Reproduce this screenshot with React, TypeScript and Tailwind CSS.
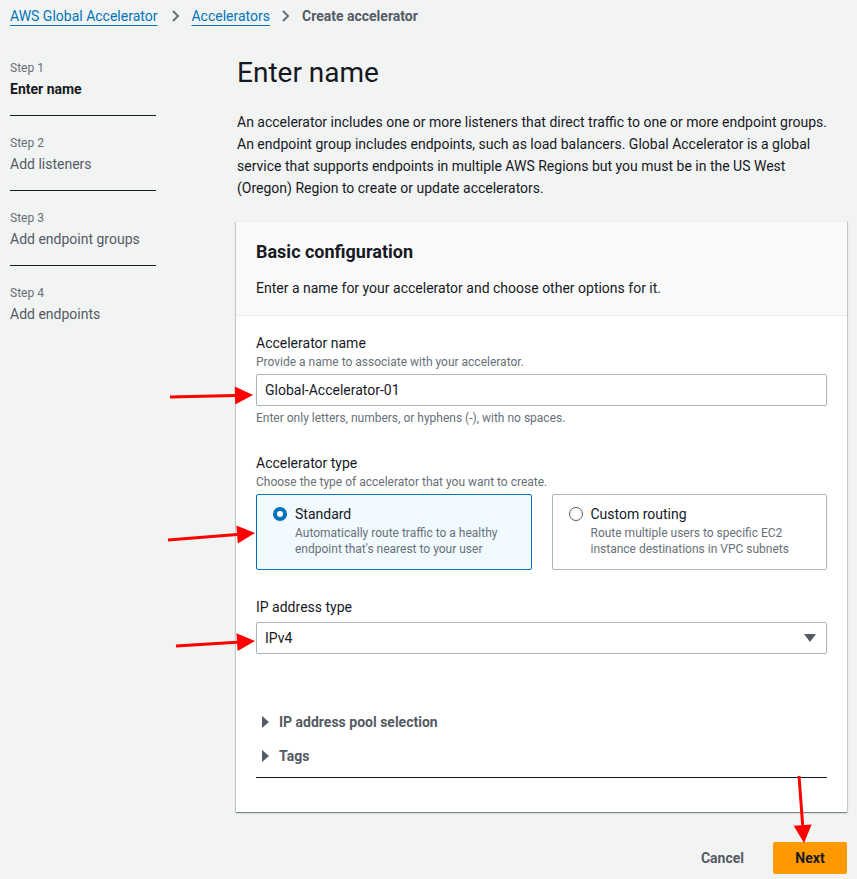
import React from "react";

const Arrow = ({ x1, y1, x2, y2 }: { x1: number; y1: number; x2: number; y2: number }) => {
  const dx = x2 - x1;
  const dy = y2 - y1;
  const len = Math.sqrt(dx * dx + dy * dy);
  const ux = dx / len;
  const uy = dy / len;
  const hl = 18;
  const hw = 9;
  const bx = x2 - ux * hl;
  const by = y2 - uy * hl;
  const px = -uy;
  const py = ux;
  return (
    <g>
      <line x1={x1} y1={y1} x2={bx} y2={by} stroke="#ff0000" strokeWidth={3} />
      <polygon
        points={`${x2},${y2} ${bx + px * hw},${by + py * hw} ${bx - px * hw},${by - py * hw}`}
        fill="#ff0000"
      />
    </g>
  );
};

const Step = ({ n, label, active, last }: { n: number; label: string; active?: boolean; last?: boolean }) => (
  <div className={`w-[146px] ${last ? "" : "border-b border-[#16191f] pb-[15px] mb-[19px]"}`}>
    <div className="text-[12px] leading-[16px] text-[#687078]">Step {n}</div>
    <div className={`text-[14px] leading-[22px] mt-[2px] ${active ? "font-bold text-[#16191f]" : "text-[#545b64]"}`}>{label}</div>
  </div>
);

export default function App() {
  return (
    <div
      className="relative w-[857px] min-h-[879px] bg-[#f2f3f3] text-[#16191f] overflow-hidden"
      style={{ fontFamily: "Roboto, 'Liberation Sans', sans-serif" }}
    >
      {/* breadcrumb */}
      <div className="flex items-center pl-[10px] pt-[6px] text-[14px] leading-[20px]">
        <span className="text-[#0073bb] underline underline-offset-[4px]">AWS Global Accelerator</span>
        <svg width="12" height="14" viewBox="0 0 12 14" className="ml-[13px] mr-[9px]">
          <path d="M3 2 L8 7 L3 12" fill="none" stroke="#687078" strokeWidth="2" />
        </svg>
        <span className="text-[#0073bb] underline underline-offset-[4px]">Accelerators</span>
        <svg width="12" height="14" viewBox="0 0 12 14" className="mx-[10px]">
          <path d="M3 2 L8 7 L3 12" fill="none" stroke="#687078" strokeWidth="2" />
        </svg>
        <span className="text-[#545b64] font-bold">Create accelerator</span>
      </div>

      <div className="flex">
        {/* left nav */}
        <div className="pl-[10px] pt-[34px] w-[236px] shrink-0">
          <Step n={1} label="Enter name" active />
          <Step n={2} label="Add listeners" />
          <Step n={3} label="Add endpoint groups" />
          <Step n={4} label="Add endpoints" last />
        </div>

        {/* main */}
        <div className="w-[611px] pt-[29px]">
          <h1 className="text-[28px] leading-[36px] font-normal pl-[1px]">Enter name</h1>
          <p className="mt-[20px] text-[14px] leading-[22px] pl-[1px] pr-[4px]">
            An accelerator includes one or more listeners that direct traffic to one or more endpoint groups. An endpoint
            group includes endpoints, such as load balancers. Global Accelerator is a global service that supports
            endpoints in multiple AWS Regions but you must be in the US West (Oregon) Region to create or update
            accelerators.
          </p>

          {/* card */}
          <div className="mt-[22px] bg-white border-t border-[#eaeded] shadow-[0_1px_1px_0_rgba(0,28,36,0.3),1px_1px_1px_0_rgba(0,28,36,0.15),-1px_1px_1px_0_rgba(0,28,36,0.15)]">
            <div className="bg-[#fafafa] border-b border-[#eaeded] px-[20px] pt-[18px] pb-[16px]">
              <div className="text-[18px] leading-[24px] font-bold">Basic configuration</div>
              <div className="mt-[13px] text-[14px] leading-[22px]">Enter a name for your accelerator and choose other options for it.</div>
            </div>
            <div className="px-[20px] pt-[16px] pb-[34px]">
              <div className="text-[14px] leading-[22px]">Accelerator name</div>
              <div className="text-[12px] leading-[16px] text-[#687078]">Provide a name to associate with your accelerator.</div>
              <div className="mt-[4px] h-[32px] border border-[#aab7b8] rounded-[2px] flex items-center px-[8px] text-[14px]">
                Global-Accelerator-01
              </div>
              <div className="mt-[4px] text-[12px] leading-[16px] text-[#687078]">
                Enter only letters, numbers, or hyphens (-), with no spaces.
              </div>

              <div className="mt-[26px] text-[14px] leading-[22px]">Accelerator type</div>
              <div className="text-[12px] leading-[16px] text-[#687078]">Choose the type of accelerator that you want to create.</div>
              <div className="mt-[4px] grid grid-cols-2 gap-[20px]">
                <div className="h-[76px] border border-[#0073bb] bg-[#f1faff] rounded-[2px] flex pl-[16px] pt-[8px]">
                  <div className="mt-[4px] w-[14px] h-[14px] rounded-full border-[4px] border-[#0073bb] bg-white shrink-0" />
                  <div className="ml-[8px]">
                    <div className="text-[14px] leading-[22px]">Standard</div>
                    <div className="text-[12px] leading-[16px] text-[#687078]">
                      Automatically route traffic to a healthy
                      <br />
                      endpoint that's nearest to your user
                    </div>
                  </div>
                </div>
                <div className="h-[76px] border border-[#aab7b8] bg-white rounded-[2px] flex pl-[16px] pt-[8px]">
                  <div className="mt-[4px] w-[14px] h-[14px] rounded-full border-[1.5px] border-[#545b64] bg-white shrink-0" />
                  <div className="ml-[8px]">
                    <div className="text-[14px] leading-[22px]">Custom routing</div>
                    <div className="text-[12px] leading-[16px] text-[#687078]">
                      Route multiple users to specific EC2
                      <br />
                      instance destinations in VPC subnets
                    </div>
                  </div>
                </div>
              </div>

              <div className="mt-[26px] text-[14px] leading-[22px]">IP address type</div>
              <div className="mt-[4px] h-[32px] border border-[#aab7b8] rounded-[2px] flex items-center justify-between pl-[8px] pr-[10px] text-[14px]">
                <span>IPv4</span>
                <svg width="12" height="9" viewBox="0 0 12 9">
                  <polygon points="0,0 12,0 6,8" fill="#545b64" />
                </svg>
              </div>

              <div className="mt-[57px] flex items-center text-[14px] leading-[22px] font-bold text-[#545b64]">
                <svg width="8" height="12" viewBox="0 0 8 12" className="ml-[6px] mr-[9px]">
                  <polygon points="0,0 7,6 0,12" fill="#545b64" />
                </svg>
                IP address pool selection
              </div>
              <div className="mt-[12px] flex items-center text-[14px] leading-[22px] font-bold text-[#545b64]">
                <svg width="8" height="12" viewBox="0 0 8 12" className="ml-[6px] mr-[9px]">
                  <polygon points="0,0 7,6 0,12" fill="#545b64" />
                </svg>
                Tags
              </div>
              <div className="mt-[10px] border-t border-[#16191f]" />
            </div>
          </div>

          {/* buttons */}
          <div className="mt-[30px] flex justify-end items-center gap-[29px]">
            <span className="text-[14px] font-bold text-[#545b64]">Cancel</span>
            <div className="w-[74px] h-[32px] bg-[#ff9900] rounded-[2px] flex items-center justify-center text-[14px] font-bold text-[#16191f]">
              Next
            </div>
          </div>
        </div>
      </div>

      {/* annotation arrows */}
      <svg className="absolute left-0 top-0 pointer-events-none" width="857" height="879">
        <Arrow x1={170} y1={397} x2={253} y2={395} />
        <Arrow x1={168} y1={540} x2={255} y2={533} />
        <Arrow x1={176} y1={646} x2={255} y2={641} />
        <Arrow x1={799} y1={776} x2={804} y2={843} />
      </svg>
    </div>
  );
}
